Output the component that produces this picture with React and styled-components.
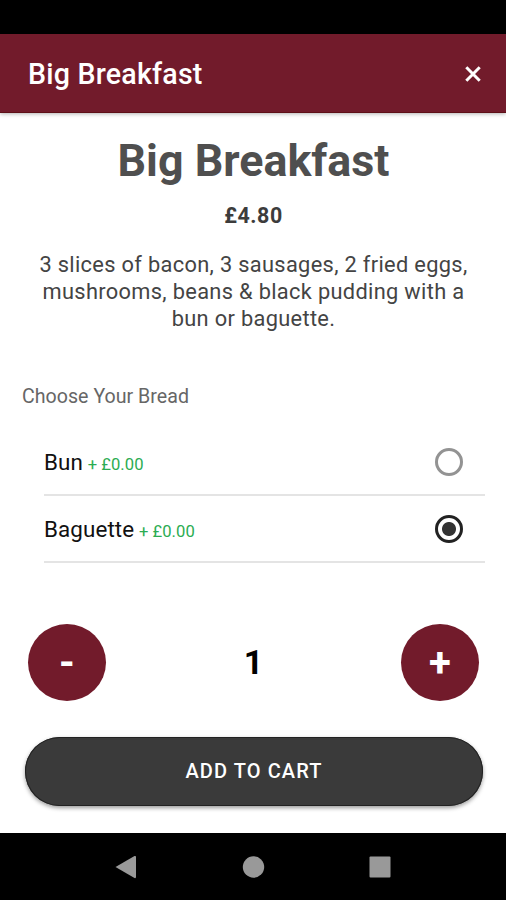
import React, { useState } from "react";
import styled, { createGlobalStyle } from "styled-components";

const GlobalStyle = createGlobalStyle`
  * {
    box-sizing: border-box;
  }
  body {
    margin: 0;
    background: #fff;
    font-family: Roboto, "Liberation Sans", sans-serif;
  }
  button {
    border: 0;
    padding: 0;
    font-family: inherit;
    cursor: pointer;
  }
`;

const Screen = styled.div`
  display: flex;
  flex-direction: column;
  height: 900px;
  background: #fff;
`;

const StatusBar = styled.div`
  flex: none;
  height: 34px;
  background: #000;
`;

const Header = styled.header`
  flex: none;
  display: flex;
  align-items: center;
  justify-content: space-between;
  height: 79px;
  padding: 2px 24px 0 28px;
  background: #721b2b;
  border-bottom: 1px solid #5e1018;
  box-shadow: 0 1px 4px rgba(0, 0, 0, 0.3);
`;

const HeaderTitle = styled.div`
  color: #fff;
  font-size: 28.6px;
  line-height: 36px;
  font-weight: 500;
  letter-spacing: 0.2px;
`;

const CloseButton = styled.button`
  display: flex;
  background: none;
  color: #fff;
`;

const Content = styled.main`
  flex: 1;
  display: flex;
  flex-direction: column;
`;

const Title = styled.h1`
  margin: 21px 0 0;
  padding-left: 1px;
  color: #4f4f4f;
  font-size: 44.8px;
  line-height: 54px;
  font-weight: 700;
  text-align: center;
`;

const Price = styled.div`
  margin-top: 15px;
  padding-left: 1px;
  color: #3c3c3c;
  font-size: 21.4px;
  line-height: 26px;
  font-weight: 700;
  letter-spacing: 0.6px;
  text-align: center;
`;

const Description = styled.p`
  margin: 22px 30px 0;
  padding-left: 1px;
  color: #444;
  font-size: 21.8px;
  line-height: 27px;
  letter-spacing: 0.33px;
  text-align: center;
`;

const GroupLabel = styled.div`
  margin: 53px 0 0 22px;
  color: #666;
  font-size: 19.6px;
  line-height: 24px;
  letter-spacing: 0.02px;
`;

const OptionList = styled.div`
  margin: 20px 21px 0 44px;
`;

const Option = styled.label`
  display: flex;
  align-items: center;
  justify-content: space-between;
  height: 67px;
  padding-right: 22px;
  border-bottom: 2px solid #e4e4e4;
  color: #111;
  font-size: 22.4px;
  letter-spacing: 0.1px;
  cursor: pointer;
`;

const Extra = styled.span`
  margin-left: -1px;
  color: #2bac52;
  font-size: 16.6px;
  letter-spacing: 0.05px;
`;

const Radio = styled.input`
  appearance: none;
  flex: none;
  width: 28px;
  height: 28px;
  margin: 0;
  border: 3px solid ${(props) => (props.checked ? "#222" : "#939393")};
  border-radius: 50%;
  background: ${(props) =>
    props.checked
      ? "radial-gradient(circle, #333 6.5px, transparent 7.5px)"
      : "none"};
`;

const Quantity = styled.div`
  display: flex;
  align-items: center;
  justify-content: space-between;
  margin: 61px 27px 0 28px;
`;

const RoundButton = styled.button`
  width: 78px;
  height: 77px;
  border-radius: 50%;
  background: #721b2b;
  color: #fff;
  font-size: 40px;
  line-height: 78px;
  font-weight: 700;
`;

const Count = styled.div`
  margin-top: -2px;
  color: #000;
  font-size: 34px;
  font-weight: 700;
`;

const CartButton = styled.button`
  height: 69px;
  margin: 36px 23px 0 25px;
  padding-bottom: 2px;
  border-radius: 35px;
  background: #3a3a3a;
  box-shadow: inset 0 0 0 1px #222, 0 2px 4px rgba(0, 0, 0, 0.4);
  color: #fff;
  font-size: 20px;
  font-weight: 500;
  letter-spacing: 1.1px;
`;

const NavBar = styled.nav`
  flex: none;
  display: flex;
  align-items: center;
  justify-content: center;
  height: 67px;
  background: #000;
`;

const options = [
  { id: "bun", name: "Bun", extra: "+ £0.00" },
  { id: "baguette", name: "Baguette", extra: "+ £0.00" },
];

const App = () => {
  const [bread, setBread] = useState("baguette");
  const [count, setCount] = useState(1);

  return (
    <Screen>
      <GlobalStyle />
      <StatusBar />
      <Header>
        <HeaderTitle>Big Breakfast</HeaderTitle>
        <CloseButton aria-label="Close">
          <svg width="18" height="18" viewBox="0 0 18 18">
            <path
              d="M2.3 2.3l13.400 13.400M15.700 2.300l-13.400 13.400"
              stroke="currentColor"
              strokeWidth="3"
            />
          </svg>
        </CloseButton>
      </Header>
      <Content>
        <Title>Big Breakfast</Title>
        <Price>£4.80</Price>
        <Description>
          3 slices of bacon, 3 sausages, 2 fried eggs, mushrooms, beans &amp;
          black pudding with a bun or baguette.
        </Description>
        <GroupLabel>Choose Your Bread</GroupLabel>
        <OptionList>
          {options.map((option) => (
            <Option key={option.id}>
              <span>
                {option.name} <Extra>{option.extra}</Extra>
              </span>
              <Radio
                type="radio"
                name="bread"
                checked={bread === option.id}
                onChange={() => setBread(option.id)}
              />
            </Option>
          ))}
        </OptionList>
        <Quantity>
          <RoundButton onClick={() => setCount(Math.max(1, count - 1))}>
            -
          </RoundButton>
          <Count>{count}</Count>
          <RoundButton onClick={() => setCount(count + 1)}>+</RoundButton>
        </Quantity>
        <CartButton>ADD TO CART</CartButton>
      </Content>
      <NavBar>
        <svg width="276" height="24" viewBox="0 0 276 24" fill="#999">
          <path d="M0.500 12L19.500 1Q21 0.500 21 2V22Q21 23.500 19.500 23z" />
          <circle cx="138.500" cy="12" r="10.700" />
          <rect x="254.500" y="1.500" width="21" height="21" rx="1" />
        </svg>
      </NavBar>
    </Screen>
  );
};

export default App;
